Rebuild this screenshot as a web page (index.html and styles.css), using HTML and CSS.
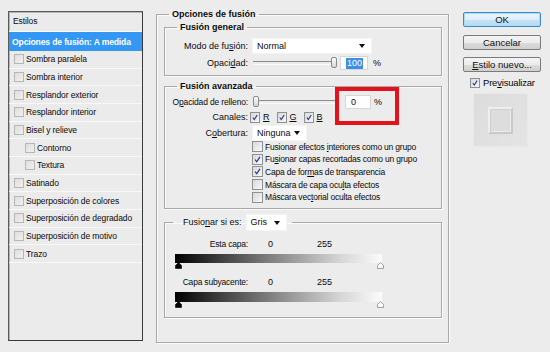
FILE: index.html
```html
<!DOCTYPE html>
<html lang="es">
<head>
<meta charset="utf-8">
<title>Estilo de capa</title>
<link rel="stylesheet" href="styles.css">
</head>
<body>
<div class="dialog">
  <aside class="styles">
    <div class="styles-head">Estilos</div>
    <div class="style-row active">Opciones de fusión: A medida</div>
    <div class="style-row"><span class="lcb"></span>Sombra paralela</div>
    <div class="style-row"><span class="lcb"></span>Sombra interior</div>
    <div class="style-row"><span class="lcb"></span>Resplandor exterior</div>
    <div class="style-row"><span class="lcb"></span>Resplandor interior</div>
    <div class="style-row"><span class="lcb"></span>Bisel y relieve</div>
    <div class="style-row sub"><span class="lcb"></span>Contorno</div>
    <div class="style-row sub"><span class="lcb"></span>Textura</div>
    <div class="style-row"><span class="lcb"></span>Satinado</div>
    <div class="style-row"><span class="lcb"></span>Superposición de colores</div>
    <div class="style-row"><span class="lcb"></span>Superposición de degradado</div>
    <div class="style-row"><span class="lcb"></span>Superposición de motivo</div>
    <div class="style-row"><span class="lcb"></span>Trazo</div>
  </aside>

  <main class="options">
    <fieldset class="group outer">
      <legend>Opciones de fusión</legend>

      <fieldset class="group general">
        <legend>Fusión general</legend>
        <div class="row r-mode">
          <span class="lbl">Modo de fu<u>s</u>ión:</span>
          <span class="select mode-select"><span>Normal</span><i class="arrow"></i></span>
        </div>
        <div class="row r-opacity">
          <span class="lbl">Opaci<u>d</u>ad:</span>
          <span class="ctl">
            <span class="slider s-general"><span class="thumb"></span></span>
            <span class="input in-general"><span class="sel">100</span></span>
            <span class="pct pct-general">%</span>
          </span>
        </div>
      </fieldset>

      <fieldset class="group advanced">
        <legend>Fusión avanzada</legend>
        <div class="row r-fill">
          <span class="lbl lbl-fill">O<u>p</u>acidad de relleno:</span>
          <span class="ctl">
            <span class="slider s-fill"><span class="thumb"></span></span>
            <span class="input in-fill">0</span>
            <span class="pct pct-fill">%</span>
          </span>
        </div>
        <div class="row r-channels">
          <span class="lbl">Canales:</span>
          <span class="ctl channels">
            <span class="cb checked"><svg viewBox="0 0 11 11"><path d="M2.5 5.5 L4.5 8.3 L8.5 2.3"/></svg></span><u class="ch">R</u>
            <span class="cb checked"><svg viewBox="0 0 11 11"><path d="M2.5 5.5 L4.5 8.3 L8.5 2.3"/></svg></span><u class="ch">G</u>
            <span class="cb checked"><svg viewBox="0 0 11 11"><path d="M2.5 5.5 L4.5 8.3 L8.5 2.3"/></svg></span><u class="ch">B</u>
          </span>
        </div>
        <div class="row r-knock">
          <span class="lbl">C<u>o</u>bertura:</span>
          <span class="select knock-select"><span>Ninguna</span><i class="arrow"></i></span>
        </div>
        <div class="checks">
          <div class="check"><span class="cb"></span><span>Fusionar efectos <u>i</u>nteriores como un grupo</span></div>
          <div class="check"><span class="cb checked"><svg viewBox="0 0 11 11"><path d="M2.5 5.5 L4.5 8.3 L8.5 2.3"/></svg></span><span>Fu<u>s</u>ionar capas recortadas como un grupo</span></div>
          <div class="check"><span class="cb checked"><svg viewBox="0 0 11 11"><path d="M2.5 5.5 L4.5 8.3 L8.5 2.3"/></svg></span><span>Capa de for<u>m</u>as de transparencia</span></div>
          <div class="check"><span class="cb"></span><span>Máscara de capa ocu<u>l</u>ta efectos</span></div>
          <div class="check"><span class="cb"></span><span>Máscara vec<u>t</u>orial oculta efectos</span></div>
        </div>
      </fieldset>

      <fieldset class="group blendif">
        <legend class="blend-legend"><span>Fusio<u>n</u>ar si es:</span><span class="select gray-select"><span>Gris</span><i class="arrow"></i></span></legend>
        <div class="range-row">
          <span class="lbl">Esta capa:</span>
          <span class="val-lo">0</span>
          <span class="val-hi">255</span>
        </div>
        <div class="ramp"></div>
        <div class="stops">
          <svg class="stop black" viewBox="0 0 7 7"><path d="M3.5 0.5 L6.5 3.5 L6.5 6.5 L0.5 6.5 L0.5 3.5 Z"/></svg>
          <svg class="stop white" viewBox="0 0 7 7"><path d="M3.5 0.5 L6.5 3.5 L6.5 6.5 L0.5 6.5 L0.5 3.5 Z"/></svg>
        </div>
        <div class="range-row second">
          <span class="lbl">Capa subyacente:</span>
          <span class="val-lo">0</span>
          <span class="val-hi">255</span>
        </div>
        <div class="ramp ramp2"></div>
        <div class="stops">
          <svg class="stop black" viewBox="0 0 7 7"><path d="M3.5 0.5 L6.5 3.5 L6.5 6.5 L0.5 6.5 L0.5 3.5 Z"/></svg>
          <svg class="stop white" viewBox="0 0 7 7"><path d="M3.5 0.5 L6.5 3.5 L6.5 6.5 L0.5 6.5 L0.5 3.5 Z"/></svg>
        </div>
      </fieldset>
    </fieldset>
  </main>

  <div class="actions">
    <button class="btn btn-ok">OK</button>
    <button class="btn btn-cancel">Cancelar</button>
    <button class="btn btn-new"><u>E</u>stilo nuevo...</button>
    <div class="preview-check"><span class="cb checked"><svg viewBox="0 0 11 11"><path d="M2.5 5.5 L4.5 8.3 L8.5 2.3"/></svg></span><span>Pre<u>v</u>isualizar</span></div>
    <div class="preview"><div class="preview-inner"></div></div>
  </div>
</div>
</body>
</html>
```

FILE: styles.css
```css
* { box-sizing: border-box; }

body {
  margin: 0;
  width: 550px;
  height: 352px;
  overflow: hidden;
  background: #ececec;
  font-family: "Liberation Sans", Arial, sans-serif;
  font-size: 9px;
  color: #0a0a0a;
}

u { text-decoration: underline; text-underline-offset: 1px; }

.dialog {
  display: flex;
  align-items: flex-start;
  padding-left: 8px;
}

/* ---------- left styles list ---------- */
.styles {
  margin-top: 11px;
  width: 135px;
  height: 330px;
  border: 1px solid #3a3a3a;
  border-top-color: #5a5a5a;
  border-left-color: #5a5a5a;
  background: #ebebeb;
  box-shadow: inset 1px 1px 0 #b4b4b4;
  font-size: 8.5px;
  letter-spacing: -0.1px;
}

.styles-head {
  height: 20px;
  line-height: 19px;
  padding-left: 4px;
  border-bottom: 1px solid #fafafa;
}

.style-row {
  height: 17.67px;
  display: flex;
  align-items: center;
  gap: 2px;
  padding-left: 5px;
  border-bottom: 1px solid #f8f8f8;
  white-space: nowrap;
}

.style-row.sub { padding-left: 16px; }

.style-row.active {
  height: 19px;
  padding-left: 3px;
  background: #3397f3;
  color: #fff;
  font-weight: bold;
  border-bottom: none;
  font-size: 8.6px;
  letter-spacing: -0.15px;
}

.lcb {
  width: 10px;
  height: 10px;
  border: 1px solid #b7b7b7;
  background: linear-gradient(135deg, #dedede, #f0f0f0);
  flex: none;
}

/* ---------- middle options ---------- */
.options {
  margin-left: 13px;
  margin-top: 8.5px;
  width: 293px;
}

fieldset.group {
  margin: 0;
  min-width: 0;
  padding: 0;
  border: 1px solid #a8a8a8;
  box-shadow: 1px 1px 0 #fbfbfb, inset 1px 1px 0 #fbfbfb;
}

fieldset.group > legend {
  padding: 0 3px;
  line-height: 11px;
  font-weight: bold;
}

fieldset.outer {
  padding: 2px 6px 24px 7px;
}
fieldset.outer > legend { margin-left: 5px; }

fieldset.general > legend,
fieldset.advanced > legend { margin-left: 12px; }

fieldset.general { padding: 5.5px 0 5px 0; }
fieldset.advanced { margin-top: 4.5px; padding: 2px 0 5px 0; }

.row {
  display: grid;
  grid-template-columns: 83px 1fr;
  column-gap: 4px;
  align-items: center;
  white-space: nowrap;
}

.lbl { text-align: right; white-space: nowrap; }
.lbl-fill { font-size: 8.5px; letter-spacing: -0.15px; }

.ctl { display: flex; align-items: center; }

.r-mode { height: 16px; }
.r-opacity { height: 14px; margin-top: 2px; }

.select {
  display: flex;
  align-items: center;
  justify-content: space-between;
  height: 16px;
  padding: 0 6px 0 4px;
  background: #fff;
  border: 1px solid #f4f4f4;
  font-weight: normal;
}

.mode-select { width: 120px; }
.knock-select { width: 55px; }

.arrow {
  width: 0;
  height: 0;
  border-left: 3.5px solid transparent;
  border-right: 3.5px solid transparent;
  border-top: 4px solid #111;
}

.slider {
  position: relative;
  height: 12px;
  display: flex;
  align-items: center;
}
.slider::before {
  content: "";
  flex: 1;
  height: 2px;
  border-top: 1px solid #8c8c8c;
  border-bottom: 1px solid #fbfbfb;
}

.thumb {
  position: absolute;
  top: 0;
  width: 6px;
  height: 11px;
  border: 1px solid #8a8a8a;
  border-radius: 2px;
  background: linear-gradient(#fdfdfd, #d6d6d6);
}

.s-general { width: 84px; margin-left: 1px; }
.s-general .thumb { right: 0; }
.s-fill { width: 82px; margin-left: 1px; }
.s-fill .thumb { left: 0; }

.input {
  display: flex;
  align-items: center;
  height: 14px;
  background: #fff;
  border: 1px solid #d7d7d7;
  padding-left: 5px;
}
.in-general { width: 28px; margin-left: 3px; }
.in-fill { width: 26px; margin-left: 10px; }

.sel {
  background: #3b8fe6;
  color: #fff;
  padding: 0 1px;
  line-height: 11px;
}

.pct-general { margin-left: 5px; }
.pct-fill { margin-left: 3px; }

.r-fill { height: 16px; position: relative; }
.r-fill::after {
  content: "";
  position: absolute;
  left: 170px;
  top: -6.5px;
  width: 56px;
  height: 30px;
  border: 4px solid #e3121c;
}

.r-channels { height: 15px; }
.channels { margin-left: -2px; }
.channels .ch { margin-left: 3px; margin-right: 7px; }

.r-knock { height: 16px; }

.checks { padding-left: 87px; }
.check {
  height: 12.6px;
  display: flex;
  align-items: center;
  gap: 2px;
  white-space: nowrap;
  font-size: 8.5px;
  letter-spacing: -0.2px;
}

.cb {
  width: 11px;
  height: 11px;
  flex: none;
  border: 1px solid #8f9090;
  background: linear-gradient(135deg, #d9d9d9, #f8f8f8);
  display: inline-flex;
}
.cb svg { width: 100%; height: 100%; }
.cb path {
  fill: none;
  stroke: #23378f;
  stroke-width: 1.5;
}

.channels .cb { width: 10px; height: 11px; }

/* blend if */
fieldset.blendif { margin-top: 5px; padding: 5.5px 0 9px 0; }
fieldset.blendif > legend.blend-legend {
  display: flex;
  align-items: center;
  margin-left: 8px;
  padding: 0 5px 0 10px;
  font-weight: normal;
  line-height: 17px;
}
.gray-select { width: 41px; height: 17px; margin-left: 4px; }

.range-row {
  display: grid;
  grid-template-columns: 83px 69px auto;
  height: 14px;
  align-items: center;
}
.range-row .lbl { text-align: right; font-size: 8.5px; letter-spacing: -0.2px; }
.range-row .val-lo { padding-left: 20px; }
.range-row.second { margin-top: 6px; }

.ramp {
  margin: 3px 0 0 10px;
  width: 207px;
  height: 9px;
  background: linear-gradient(to right, #000 0%, #3a3a3a 20%, #8a8a8a 50%, #d6d6d6 80%, #fbfbfb 100%);
}
.ramp2 { height: 10px; }

.stops {
  margin-left: 10px;
  width: 209px;
  height: 6px;
  display: flex;
  justify-content: space-between;
  align-items: flex-end;
}
.stop { width: 7px; height: 7px; }
.stop.black path { fill: #000; stroke: #000; stroke-width: 0.6; }
.stop.white path { fill: #fafafa; stroke: #8a8a8a; stroke-width: 0.8; }

/* ---------- right actions ---------- */
.actions {
  margin-left: 14px;
  margin-top: 12px;
  width: 78px;
  display: flex;
  flex-direction: column;
}

.btn {
  width: 78px;
  height: 15px;
  padding: 0;
  font-family: "Liberation Sans", Arial, sans-serif;
  font-size: 9.5px;
  color: #111;
  border: 1px solid #7a7a7a;
  border-radius: 2px;
  background: linear-gradient(#f4f4f4 0%, #ececec 50%, #dcdcdc 51%, #cfcfcf 100%);
  line-height: 13px;
}
.btn-ok {
  border-color: #3c8bc6;
  background: linear-gradient(#eaf5fc 0%, #ddeefa 50%, #c8e2f5 51%, #b8daf1 100%);
  box-shadow: inset 0 0 0 1px #a8dcf8;
}
.btn-cancel { margin-top: 8px; }
.btn-new { margin-top: 7px; }

.preview-check {
  margin-top: 5px;
  padding-left: 7px;
  height: 11px;
  display: flex;
  align-items: center;
  gap: 3px;
  font-size: 9.5px;
  letter-spacing: -0.2px;
  white-space: nowrap;
}
.preview-check .cb { width: 10px; height: 10px; }

.preview {
  margin: 5px 0 0 10px;
  width: 55px;
  height: 54px;
  background: linear-gradient(135deg, #dcdcdc, #e4e4e4);
  border: 1px solid #e8e8e8;
  display: flex;
  align-items: center;
  justify-content: center;
}
.preview-inner {
  width: 25px;
  height: 27px;
  border: 2px solid;
  border-color: #eeeeee #c9c9c9 #c9c9c9 #eeeeee;
  background: #dddddd;
  box-shadow: inset 1px 1px 0 #cfcfcf, inset -1px -1px 0 #ececec;
}
```
